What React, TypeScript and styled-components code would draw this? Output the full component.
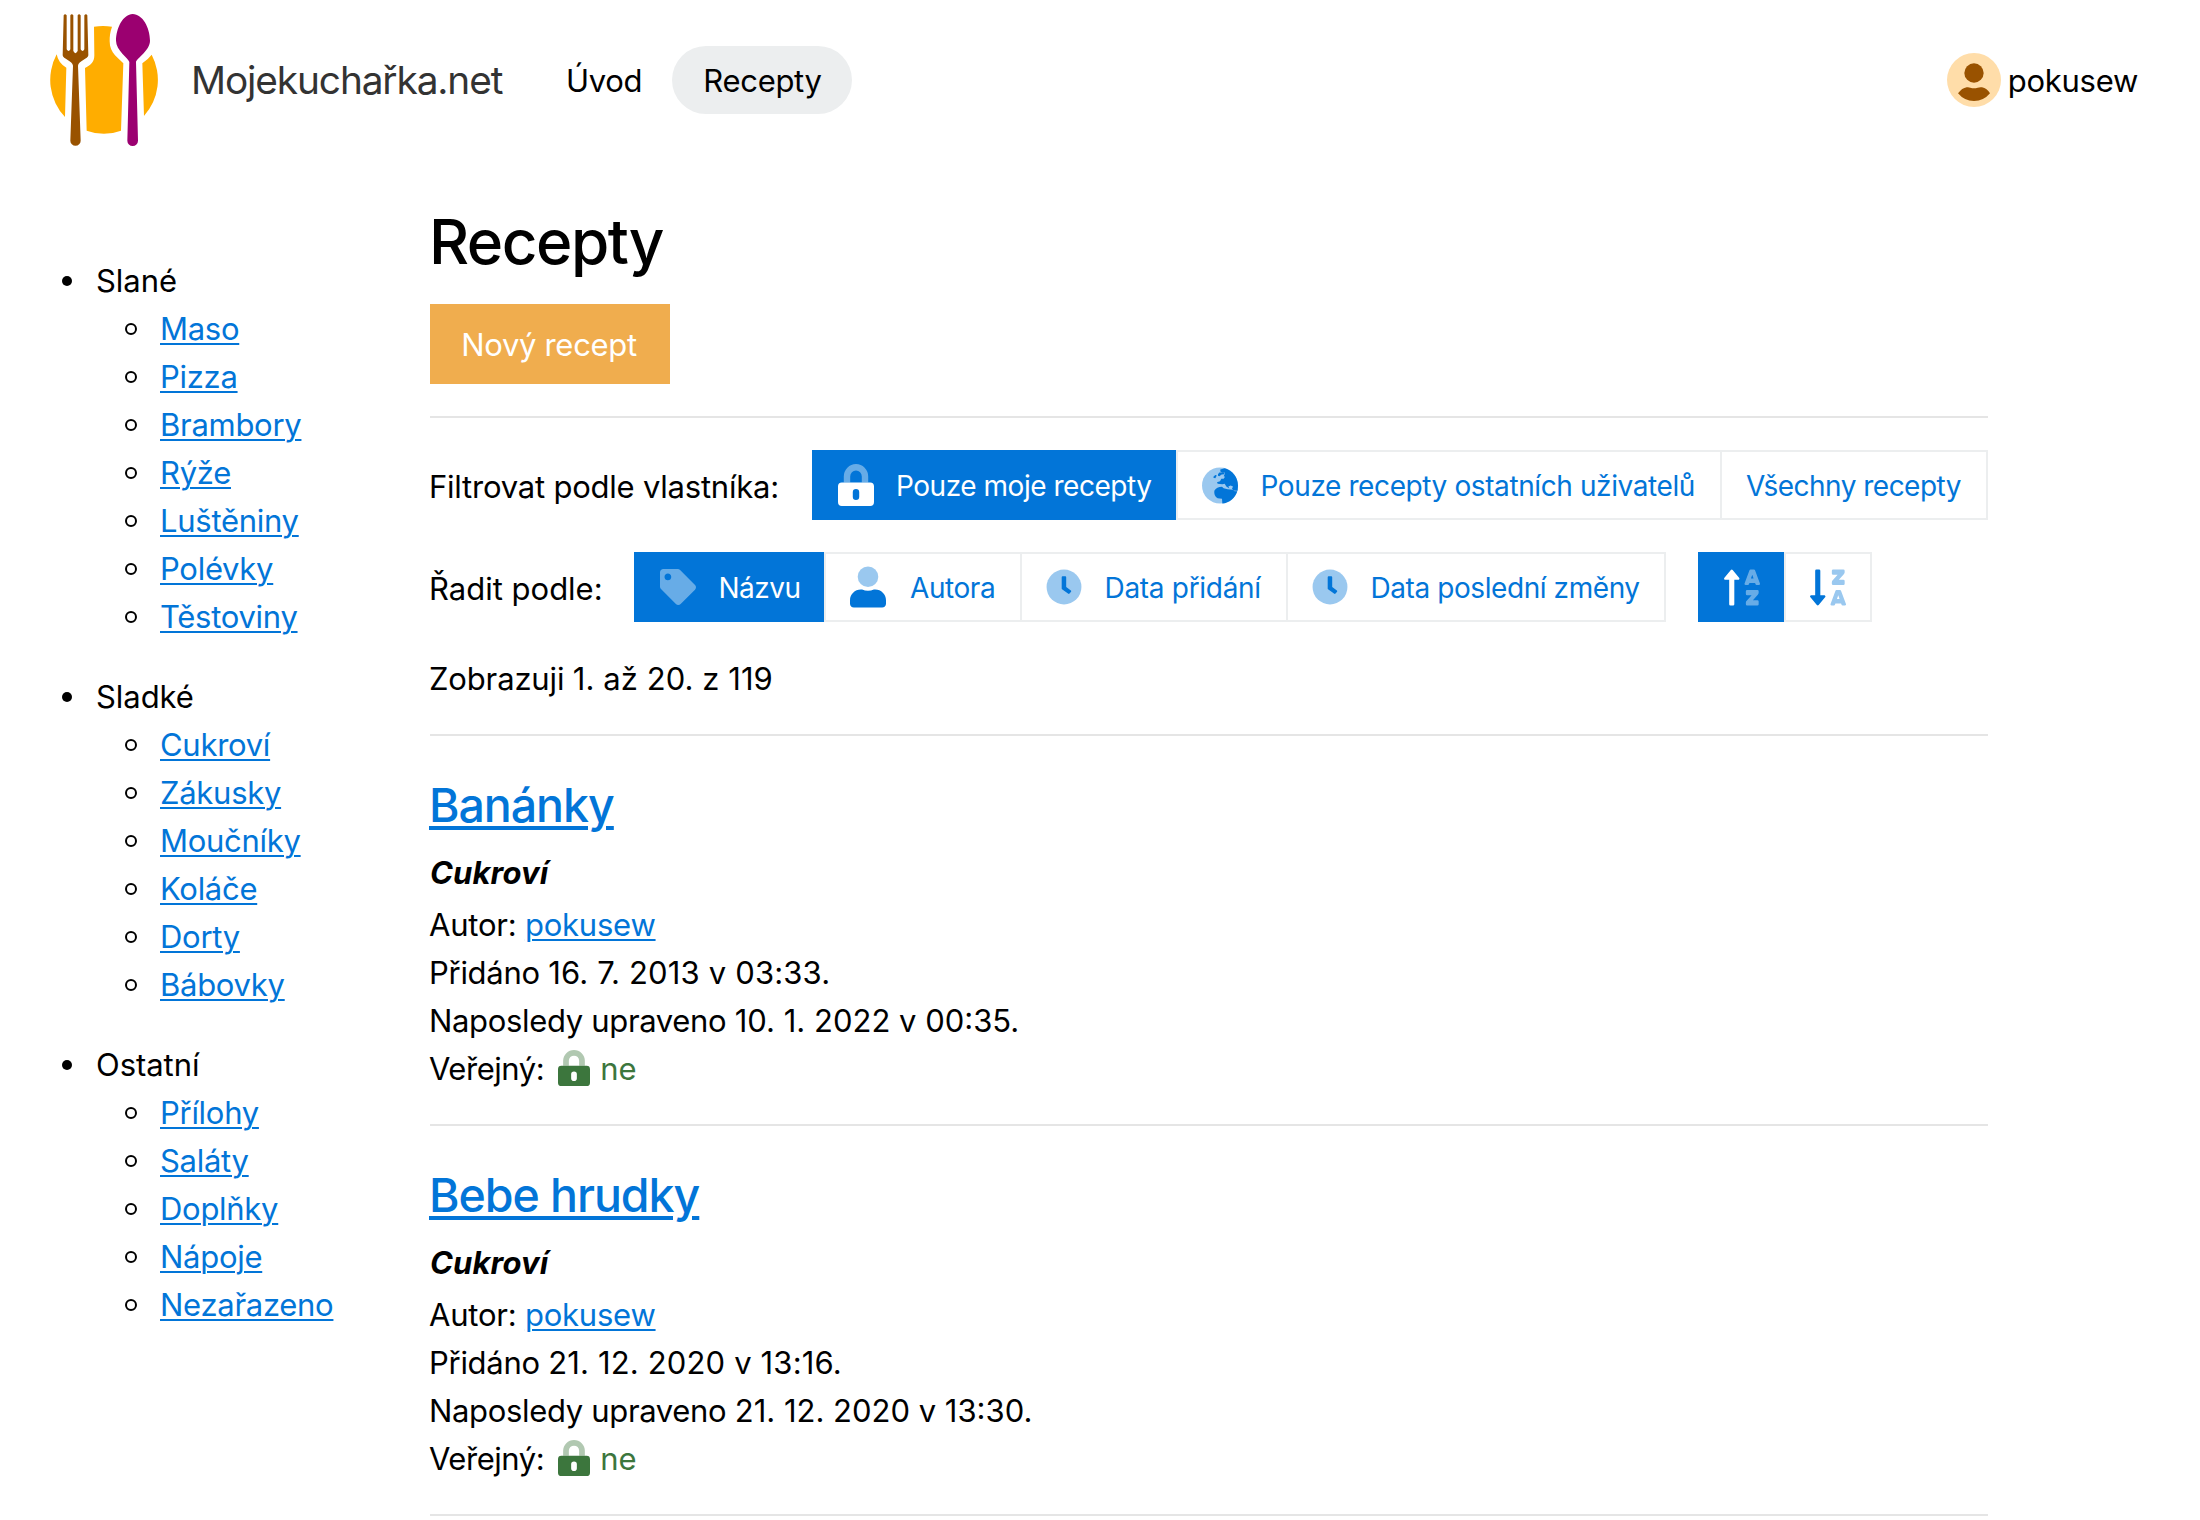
import React from "react";
import styled, { createGlobalStyle } from "styled-components";
import { FaSortAlphaUp, FaSortAlphaDownAlt } from "react-icons/fa";

const blue = "#0275d8";
const grey = "#eceeef";

const GlobalStyle = createGlobalStyle`
  *, *::before, *::after { box-sizing: border-box; }
  body {
    margin: 0;
    background: #fff;
    color: #000;
    font-family: Inter, "Liberation Sans", sans-serif;
    font-size: 31px;
    font-weight: 430;
    line-height: 48px;
    letter-spacing: -0.28px;
    overflow: hidden;
  }
  h1, h2, p, ul { margin: 0; padding: 0; font-weight: inherit; }
  ul { list-style: none; }
`;

const Page = styled.div`
  width: 2200px;
  height: 1520px;
  overflow: hidden;
`;

const Header = styled.header`
  display: flex;
  align-items: center;
  height: 160px;
  padding: 0 62px 0 50px;
`;

const Brand = styled.a`
  display: flex;
  align-items: center;
  gap: 33px;
  width: 486px;
  color: #333;
  font-size: 38.8px;
  letter-spacing: -1.12px;
`;

const Nav = styled.nav`
  display: flex;
`;

const NavLink = styled.a<{ $active?: boolean }>`
  height: 68px;
  padding: 11px 30px 9px 30px;
  border-radius: 34px;
  background: ${(p) => (p.$active ? grey : "transparent")};
  letter-spacing: -0.3px;

  & + & {
    padding-left: 31px;
  }
`;

const User = styled.a`
  display: flex;
  align-items: center;
  gap: 7px;
  margin-left: auto;
  letter-spacing: -0.27px;
`;

const UserName = styled.span`
  padding-top: 1px;
`;

const Body = styled.div`
  display: grid;
  grid-template-columns: 368px 1558px;
  padding-left: 62px;
`;

const Sidebar = styled.ul`
  display: flex;
  flex-direction: column;
  gap: 32px;
  padding-top: 97px;
`;

const Category = styled.div`
  display: flex;
  align-items: center;
  letter-spacing: -0.05px;

  &::before {
    content: "";
    width: 10px;
    height: 10px;
    margin: 0 24px 0 0;
    border-radius: 50%;
    background: #000;
  }
`;

const SubItem = styled.li`
  display: flex;
  align-items: center;
  padding-left: 63px;

  &::before {
    content: "";
    width: 12px;
    height: 12px;
    margin: 0 23px 0 0;
    border: 2px solid #000;
    border-radius: 50%;
  }
`;

const Link = styled.a`
  color: ${blue};
  text-decoration: underline;
  text-decoration-thickness: 2px;
  text-underline-offset: 3px;
`;

const Main = styled.main`
  padding-top: 47px;
`;

const Title = styled.h1`
  font-size: 62px;
  line-height: 70px;
  font-weight: 500;
  letter-spacing: -1.5px;
  text-indent: -1px;
`;

const NewButton = styled.button`
  display: block;
  width: 240px;
  height: 80px;
  margin-top: 27px;
  padding: 1px 2px 0 0;
  border: 0;
  background: #f0ad4e;
  color: #fff;
  font: inherit;
  letter-spacing: -0.32px;
`;

const Divider = styled.hr`
  height: 2px;
  margin: 32px 0;
  border: 0;
  background: #e5e5e5;
`;

const Toolbar = styled.div`
  display: flex;
  align-items: center;
  height: 70px;
  margin-bottom: 32px;
`;

const ToolbarLabel = styled.span<{ $width: number; $track: number }>`
  width: ${(p) => p.$width}px;
  padding-top: 3px;
  letter-spacing: ${(p) => p.$track}px;
  text-indent: -1px;
  white-space: nowrap;
`;

const Group = styled.div`
  display: flex;

  & + & {
    margin-left: 32px;
  }
`;

const Option = styled.button<{ $width: number; $active?: boolean; $track?: number; $gap?: number }>`
  display: flex;
  align-items: center;
  gap: ${(p) => p.$gap ?? 22.5}px;
  width: ${(p) => p.$width}px;
  height: 70px;
  padding: 0 0 0 24px;
  border: 2px solid ${(p) => (p.$active ? blue : grey)};
  background: ${(p) => (p.$active ? blue : "#fff")};
  color: ${(p) => (p.$active ? "#fff" : blue)};
  font: inherit;
  font-size: 28px;
  letter-spacing: ${(p) => p.$track ?? -0.42}px;
  white-space: nowrap;

  & + & {
    margin-left: -2px;
  }

  svg {
    flex: none;
  }
`;

const OptionText = styled.span`
  padding-top: 2px;
`;

const SortIcon = styled.span`
  display: flex;
  mask-image: linear-gradient(to right, #000 48%, rgba(0, 0, 0, 0.4) 48%);

  svg {
    width: 36px;
    height: 41px;
  }
`;

const Line = styled.p<{ $track: number }>`
  letter-spacing: ${(p) => p.$track}px;
  text-indent: -1px;
`;

const Summary = styled(Line)`
  padding-top: 1px;
  margin-bottom: -1px;
`;

const When = styled.span<{ $track?: number }>`
  letter-spacing: ${(p) => p.$track ?? 0}px;
`;

const Recipe = styled.article`
  margin-top: -32px;
`;

const RecipeTitle = styled.h2`
  height: 113px;
  padding-top: 43px;
  font-size: 46.5px;
  font-weight: 450;
  line-height: 52px;
  text-indent: -1px;
`;

const RecipeLink = styled(Link)`
  letter-spacing: -1.05px;
  text-decoration-thickness: 4px;
  text-underline-offset: 4px;
`;

const RecipeCategory = styled.p`
  margin-bottom: 4px;
  font-style: italic;
  font-weight: 700;
  letter-spacing: 0.1px;
`;

const RecipeDivider = styled(Divider)`
  margin-top: 31px;
`;

const Visibility = styled.span`
  display: inline-flex;
  align-items: center;
  gap: 10px;
  height: 48px;
  margin-left: 14px;
  color: #3c763d;
  letter-spacing: 0;
  text-indent: 0;
  vertical-align: top;

  svg {
    margin-bottom: 2px;
  }
`;

const Logo = () => (
  <svg width="108" height="132" viewBox="150 42 324 396">
    <g fill="#ffad00">
      <path d="M170 163A162 162 0 0 0 195 351L199 203Q175 190 170 163Z" />
      <path d="M455 164A162 162 0 0 1 432 348L427 190Q446 176 455 164Z" />
      <path d="M282 80Q309 76 336 80C330 97 329 108 329 124C329 142 335 155 345 166Q357 178 370 190L363 392Q312 411 260 392L255 204C274 194 283 186 283 166Z" />
    </g>
    <path
      fill="#995200"
      d="M191 46Q195 39 200 46L200 148Q206 158 211 148V46Q215 39 220 46V153Q226 166 233 153V46Q237 39 242 46V148Q248 158 253 148V46Q258 39 262 46L265 166C265 176 235 184 234 197L242 422A15.5 15.5 0 0 1 211 422L219 197C218 184 188 176 188 166Z"
    />
    <path
      fill="#9b0070"
      d="M398 42C428 42 450 84 450 122C450 152 410 174 408 186L414 422A15.5 15.5 0 0 1 382 422L388 186C386 174 348 152 348 122C348 84 370 42 398 42Z"
    />
  </svg>
);

const Avatar = () => (
  <svg width="54" height="54" viewBox="138 99 162 162">
    <circle cx="219" cy="180" r="81" fill="#ffdda9" />
    <circle cx="219" cy="159" r="29" fill="#995200" />
    <path
      fill="#995200"
      d="M171 220Q183 204 197 202Q203 201 208 203Q219 206 230 203Q237 201 243 202Q258 205 267 220Q248 243 219 243Q190 243 171 220Z"
    />
  </svg>
);

const LockIcon = ({ width = 36, height = 42 }: { width?: number; height?: number }) => (
  <svg width={width} height={height} viewBox="0 0 448 512" preserveAspectRatio="none" fill="currentColor">
    <path opacity=".4" d="M72 224v-72a152 152 0 0 1 304 0v72h-80v-72a72 72 0 0 0-144 0v72z" />
    <path
      fillRule="evenodd"
      d="M48 224h352a48 48 0 0 1 48 48v192a48 48 0 0 1-48 48H48a48 48 0 0 1-48-48V272a48 48 0 0 1 48-48zm216 120a40 40 0 0 0-80 0v56a40 40 0 0 0 80 0z"
    />
  </svg>
);

const UserIcon = () => (
  <svg width="36" height="42" viewBox="0 0 448 512" fill="currentColor">
    <circle opacity=".4" cx="224" cy="128" r="128" />
    <path d="M313.6 288h-16.7c-22.2 10.2-46.9 16-72.9 16s-50.6-5.8-72.9-16h-16.7C60.2 288 0 348.2 0 422.4V464c0 26.5 21.5 48 48 48h352c26.5 0 48-21.5 48-48v-41.6c0-74.2-60.2-134.4-134.4-134.4z" />
  </svg>
);

const TagIcon = () => (
  <svg width="36" height="36" viewBox="0 0 512 512" fill="currentColor">
    <path
      opacity=".4"
      d="M0 252.118V48C0 21.49 21.49 0 48 0h204.118a48 48 0 0 1 33.941 14.059l211.882 211.882c18.745 18.745 18.745 49.137 0 67.882L293.823 497.941c-18.745 18.745-49.137 18.745-67.882 0L14.059 286.059A48 48 0 0 1 0 252.118zM112 64c-26.51 0-48 21.49-48 48s21.49 48 48 48 48-21.49 48-48-21.49-48-48-48z"
    />
  </svg>
);

const ClockIcon = () => (
  <svg width="36" height="36" viewBox="0 0 512 512" fill="currentColor">
    <circle opacity=".4" cx="256" cy="256" r="248" />
    <path d="M317.800 351.600l-89.600-65.200c-3.100-2.300-4.900-5.900-4.900-9.700V116c0-6.600 5.400-12 12-12h40c6.600 0 12 5.400 12 12v141.700l66.800 48.600c5.400 3.900 6.500 11.400 2.600 16.800L334.600 349c-3.900 5.300-11.400 6.500-16.800 2.600z" />
  </svg>
);

const GlobeIcon = () => (
  <svg width="36" height="37" viewBox="1191 80 108 110" fill="currentColor">
    <circle opacity=".4" cx="1245" cy="135" r="54" />
    <path d="M1259 83C1283 90 1299 110 1299 135L1298 151L1286 150L1281 145L1284 138L1277 135L1270 138L1273 144L1264 138L1259 130L1252 131L1238 130L1236 125L1245 122L1249 115L1256 115L1260 109L1256 107L1259 101L1259 96L1252 97L1246 93L1246 87Z" />
    <path d="M1239 101L1243 96L1257 96L1258 101L1250 102L1243 107L1239 106Z" />
    <path d="M1227 107Q1233 101 1235 106L1231 113L1225 112Z" />
    <path d="M1228 151Q1235 139 1251 139L1256 143L1268 146L1284 148L1289 152L1297 152C1290 172 1274 187 1252 189L1251 175L1238 173Q1226 168 1228 151Z" />
  </svg>
);

const menu = [
  {
    name: "Slané",
    items: ["Maso", "Pizza", "Brambory", "Rýže", "Luštěniny", "Polévky", "Těstoviny"],
  },
  {
    name: "Sladké",
    items: ["Cukroví", "Zákusky", "Moučníky", "Koláče", "Dorty", "Bábovky"],
  },
  {
    name: "Ostatní",
    items: ["Přílohy", "Saláty", "Doplňky", "Nápoje", "Nezařazeno"],
  },
];

const recipes = [
  {
    name: "Banánky",
    category: "Cukroví",
    author: "pokusew",
    added: "16. 7. 2013 v 03:33.",
    edited: "10. 1. 2022 v 00:35.",
  },
  {
    name: "Bebe hrudky",
    category: "Cukroví",
    author: "pokusew",
    added: "21. 12. 2020 v 13:16.",
    edited: "21. 12. 2020 v 13:30.",
  },
];

export default function App() {
  return (
    <Page>
      <GlobalStyle />
      <Header>
        <Brand>
          <Logo />
          Mojekuchařka.net
        </Brand>
        <Nav>
          <NavLink>Úvod</NavLink>
          <NavLink $active>Recepty</NavLink>
        </Nav>
        <User>
          <Avatar />
          <UserName>pokusew</UserName>
        </User>
      </Header>
      <Body>
        <Sidebar>
          {menu.map((group) => (
            <li key={group.name}>
              <Category>{group.name}</Category>
              <ul>
                {group.items.map((item) => (
                  <SubItem key={item}>
                    <Link>{item}</Link>
                  </SubItem>
                ))}
              </ul>
            </li>
          ))}
        </Sidebar>
        <Main>
          <Title>Recepty</Title>
          <NewButton>Nový recept</NewButton>
          <Divider />
          <Toolbar>
            <ToolbarLabel $width={382} $track={-0.22}>
              Filtrovat podle vlastníka:
            </ToolbarLabel>
            <Group>
              <Option $width={366} $active $track={-0.47} $gap={22}>
                <LockIcon />
                <OptionText>Pouze moje recepty</OptionText>
              </Option>
              <Option $width={546} $track={-0.4}>
                <GlobeIcon />
                <OptionText>Pouze recepty ostatních uživatelů</OptionText>
              </Option>
              <Option $width={268} $track={-0.52}>
                <OptionText>Všechny recepty</OptionText>
              </Option>
            </Group>
          </Toolbar>
          <Toolbar>
            <ToolbarLabel $width={204} $track={0}>
              Řadit podle:
            </ToolbarLabel>
            <Group>
              <Option $width={192} $active $track={-0.5}>
                <TagIcon />
                <OptionText>Názvu</OptionText>
              </Option>
              <Option $width={198} $gap={24}>
                <UserIcon />
                <OptionText>Autora</OptionText>
              </Option>
              <Option $width={268} $track={-0.3}>
                <ClockIcon />
                <OptionText>Data přidání</OptionText>
              </Option>
              <Option $width={380}>
                <ClockIcon />
                <OptionText>Data poslední změny</OptionText>
              </Option>
            </Group>
            <Group>
              <Option $width={88} $active>
                <SortIcon>
                  <FaSortAlphaUp />
                </SortIcon>
              </Option>
              <Option $width={88}>
                <SortIcon>
                  <FaSortAlphaDownAlt />
                </SortIcon>
              </Option>
            </Group>
          </Toolbar>
          <Summary $track={-0.15}>
            Zobrazuji <When $track={0.06}>1. až 20. z 119</When>
          </Summary>
          <Divider />
          {recipes.map((recipe) => (
            <Recipe key={recipe.name}>
              <RecipeTitle>
                <RecipeLink>{recipe.name}</RecipeLink>
              </RecipeTitle>
              <RecipeCategory>{recipe.category}</RecipeCategory>
              <Line $track={-0.22}>
                Autor: <Link>{recipe.author}</Link>
              </Line>
              <Line $track={-0.28}>
                Přidáno <When $track={0.15}>{recipe.added}</When>
              </Line>
              <Line $track={-0.33}>
                Naposledy upraveno <When>{recipe.edited}</When>
              </Line>
              <Line $track={-0.45}>
                Veřejný:
                <Visibility>
                  <LockIcon width={32} height={36} />
                  ne
                </Visibility>
              </Line>
              <RecipeDivider />
            </Recipe>
          ))}
        </Main>
      </Body>
    </Page>
  );
}
